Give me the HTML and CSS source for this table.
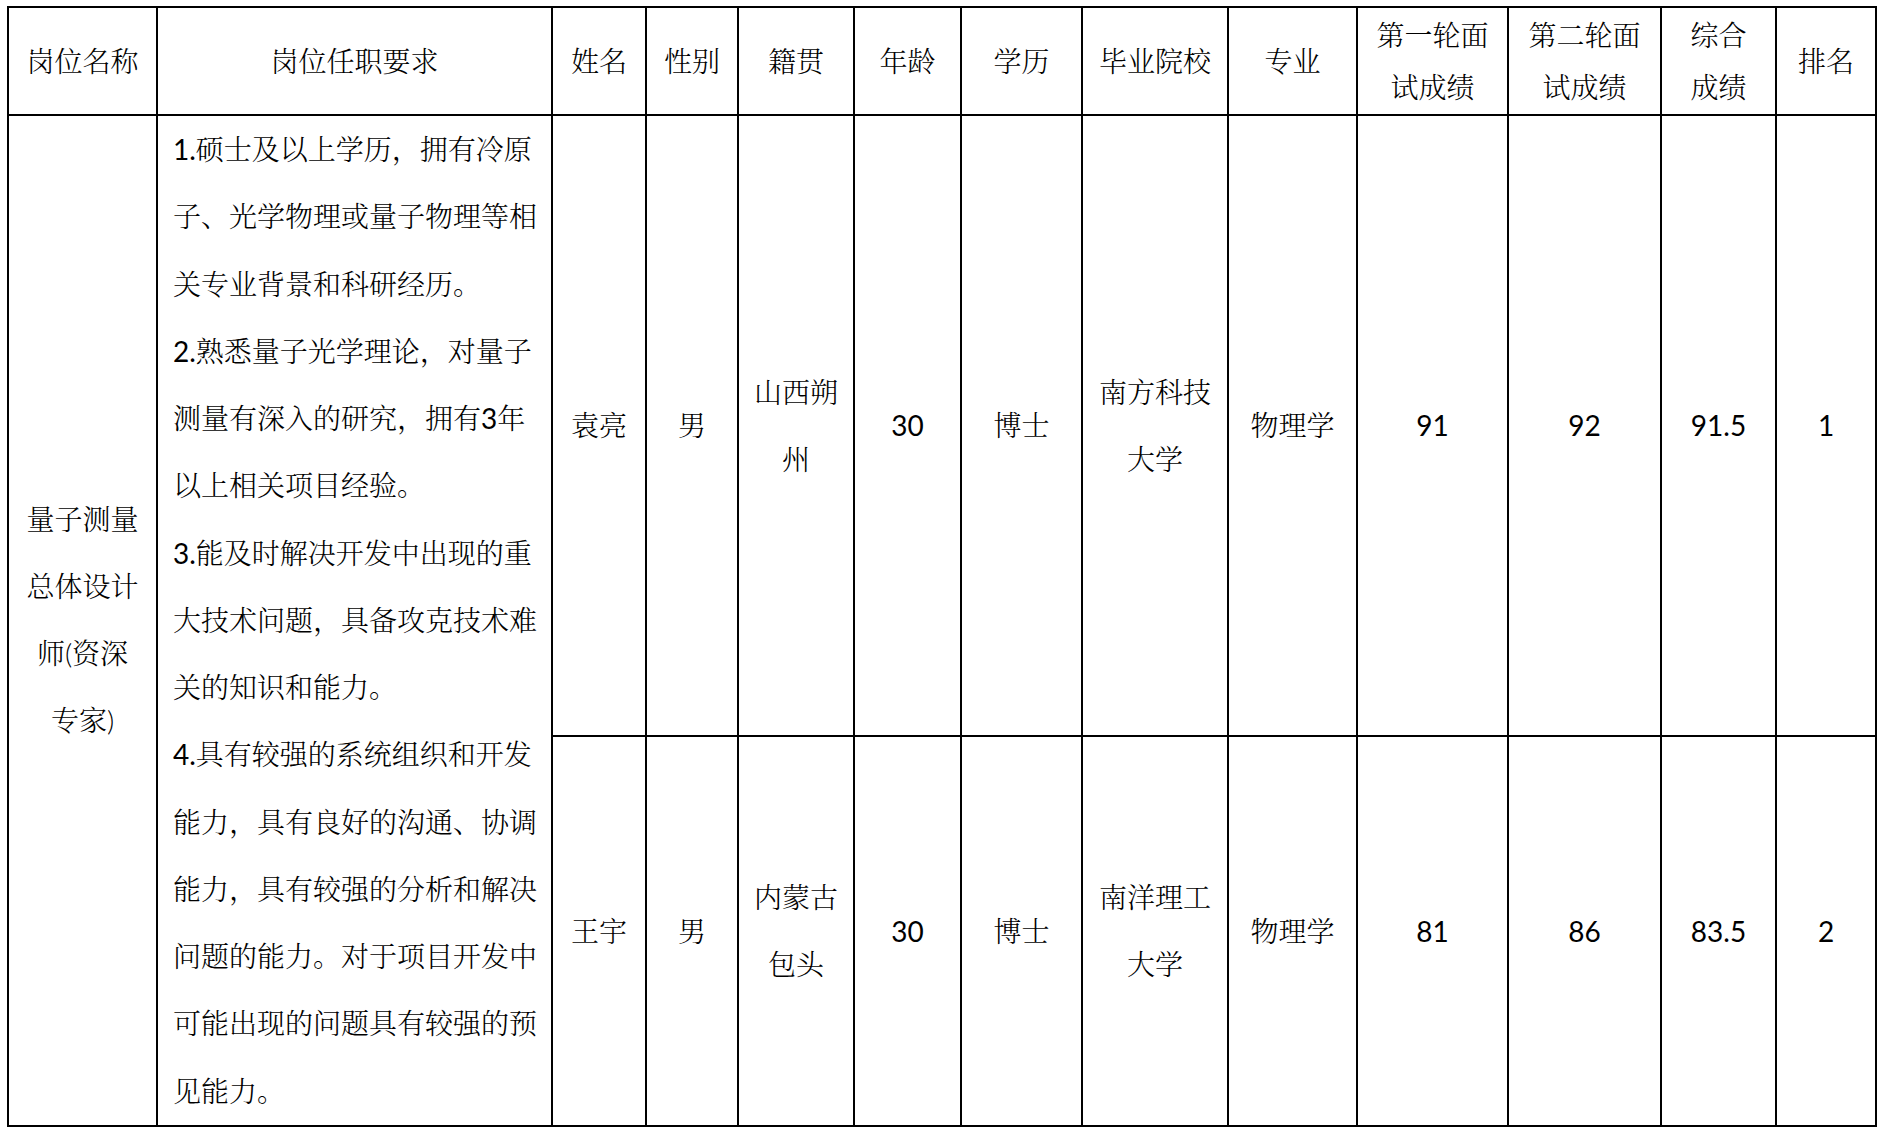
FILE: index.html
```html
<!DOCTYPE html>
<html lang="zh-CN">
<head>
<meta charset="utf-8">
<title>岗位面试成绩</title>
<link rel="stylesheet" href="styles.css">
</head>
<body>
<table class="grid">
  <colgroup>
    <col class="w1"><col class="w2"><col class="w3"><col class="w4"><col class="w5"><col class="w6"><col class="w7"><col class="w8"><col class="w9"><col class="w10"><col class="w11"><col class="w12"><col class="w13">
  </colgroup>
  <tr class="head">
    <th>岗位名称</th>
    <th>岗位任职要求</th>
    <th>姓名</th>
    <th>性别</th>
    <th>籍贯</th>
    <th>年龄</th>
    <th>学历</th>
    <th>毕业院校</th>
    <th>专业</th>
    <th class="two">第一轮面<br>试成绩</th>
    <th class="two">第二轮面<br>试成绩</th>
    <th class="two">综合<br>成绩</th>
    <th>排名</th>
  </tr>
  <tr class="row1">
    <td rowspan="2" class="post">量子测量<br>总体设计<br>师(资深<br>专家)</td>
    <td rowspan="2" class="req"><span class="n">1.</span>硕士及以上学历，拥有冷原<br>子、光学物理或量子物理等相<br>关专业背景和科研经历。<br><span class="n">2.</span>熟悉量子光学理论，对量子<br>测量有深入的研究，拥有<span class="n">3</span>年<br>以上相关项目经验。<br><span class="n">3.</span>能及时解决开发中出现的重<br>大技术问题，具备攻克技术难<br>关的知识和能力。<br><span class="n">4.</span>具有较强的系统组织和开发<br>能力，具有良好的沟通、协调<br>能力，具有较强的分析和解决<br>问题的能力。对于项目开发中<br>可能出现的问题具有较强的预<br>见能力。</td>
    <td>袁亮</td>
    <td>男</td>
    <td>山西朔<br>州</td>
    <td class="num">30</td>
    <td>博士</td>
    <td>南方科技<br>大学</td>
    <td>物理学</td>
    <td class="num">91</td>
    <td class="num">92</td>
    <td class="num">91.5</td>
    <td class="num">1</td>
  </tr>
  <tr class="row2">
    <td>王宇</td>
    <td>男</td>
    <td>内蒙古<br>包头</td>
    <td class="num">30</td>
    <td>博士</td>
    <td>南洋理工<br>大学</td>
    <td>物理学</td>
    <td class="num">81</td>
    <td class="num">86</td>
    <td class="num">83.5</td>
    <td class="num">2</td>
  </tr>
</table>
</body>
</html>
```

FILE: styles.css
```css
html, body {
  background: #ffffff;
}
body {
  margin: 6px 0 0 7px;
  font-family: Lato, "Noto Serif CJK SC", "Noto Sans CJK SC", serif;
  font-size: 28px;
  font-weight: 300;
  color: #000000;
}
.grid {
  border-collapse: separate;
  border-spacing: 0;
  table-layout: fixed;
  width: 1870px;
  border-top: 2px solid #000;
  border-left: 2px solid #000;
}
.w1 { width: 149px; }
.w2 { width: 395px; }
.w3 { width: 94px; }
.w4 { width: 92px; }
.w5 { width: 116px; }
.w6 { width: 107px; }
.w7 { width: 121px; }
.w8 { width: 146px; }
.w9 { width: 129px; }
.w10 { width: 151px; }
.w11 { width: 153px; }
.w12 { width: 115px; }
.w13 { width: 100px; }

.grid th,
.grid td {
  box-sizing: border-box;
  border-right: 2px solid #000;
  border-bottom: 2px solid #000;
  padding: 0;
  text-align: center;
  vertical-align: middle;
  font-weight: 300;
  white-space: nowrap;
  line-height: 67px;
}
.head { height: 108px; }
.row1 { height: 620px; }
.row2 { height: 389px; }

.grid th.two { line-height: 52px; }
.grid td.num,
.n {
  font-weight: 400;
}
.grid td.req {
  text-align: left;
  vertical-align: top;
  padding-left: 15px;
  line-height: 67.27px;
}
```
